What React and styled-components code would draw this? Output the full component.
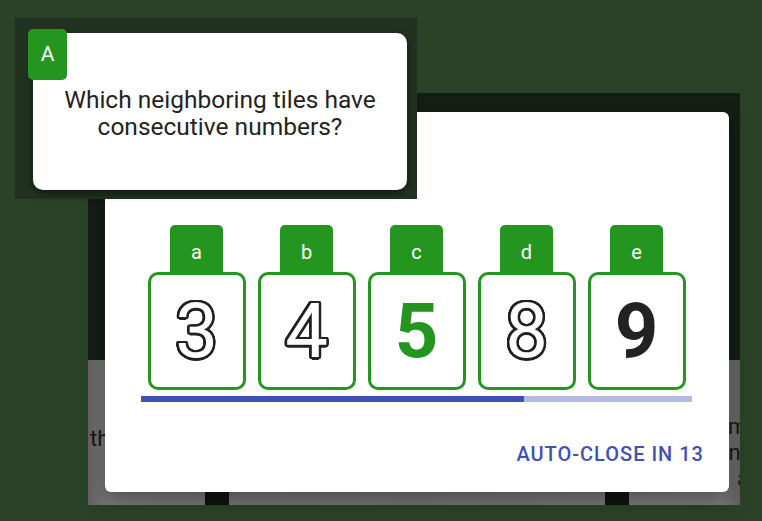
import styled, { createGlobalStyle, css } from 'styled-components';

const GREEN = '#24961f';
const INDIGO = '#3f51b5';

// ring of shadows that reads as an outline around white digits
const outlineRing = (radius, color, steps = 24) =>
  Array.from({ length: steps }, (_, i) => {
    const a = (i / steps) * Math.PI * 2;
    return `${(Math.cos(a) * radius).toFixed(2)}px ${(Math.sin(a) * radius).toFixed(2)}px 0 ${color}`;
  })
    .concat(
      Array.from({ length: 12 }, (_, i) => {
        const a = (i / 12) * Math.PI * 2;
        const r = radius * 0.55;
        return `${(Math.cos(a) * r).toFixed(2)}px ${(Math.sin(a) * r).toFixed(2)}px 0 ${color}`;
      })
    )
    .join(', ');

const GlobalStyle = createGlobalStyle`
  html, body {
    margin: 0;
    padding: 0;
    background: #2a4227;
  }
  body {
    font-family: Roboto, "Liberation Sans", sans-serif;
  }
`;

const Stage = styled.div`
  position: relative;
  width: 762px;
  height: 521px;
  box-sizing: border-box;
  padding: 93px 0 0 88px;
  overflow: hidden;
  background: #2a4227;
`;

/* the app screen that sits behind the dialog */
const BackPage = styled.div`
  width: 652px;
  height: 412px;
  display: flex;
  flex-direction: column;
  overflow: hidden;
`;

const BackHeader = styled.div`
  height: 275px;
  background: #141e13;
`;

const BackBody = styled.div`
  flex: 1;
  display: flex;
  flex-direction: column;
  background: linear-gradient(90deg, #626262 0%, #7a7a7a 3%, #737373 50%, #7d7d7d 97%, #5f5f5f 100%);
`;

const BackText = styled.div`
  flex: 1;
  display: flex;
  justify-content: space-between;
  padding-left: 2px;
  font-size: 22px;
  line-height: 26px;
  color: #161616;
`;

const LeftWords = styled.div`
  padding-top: 66px;
`;

const RightWords = styled.div`
  width: 24px;
  padding-top: 54px;
  white-space: pre;
  overflow: hidden;
`;

const RightLine = styled.div`
  padding-left: ${(p) => p.$indent || 0}px;
`;

const PostRow = styled.div`
  display: flex;
  gap: 376px;
  padding-left: 117px;
  height: 13px;
`;

const Post = styled.div`
  width: 24px;
  background: #0e150d;
`;

/* dialog */
const Modal = styled.div`
  position: absolute;
  left: 105px;
  top: 112px;
  width: 624px;
  height: 380px;
  box-sizing: border-box;
  padding: 113px 26px 0 36px;
  display: flex;
  flex-direction: column;
  background: #fff;
  border-radius: 6px;
  box-shadow: 0 8px 20px rgba(0, 0, 0, 0.35);
`;

const TileRow = styled.div`
  width: 551px;
  display: flex;
  justify-content: center;
  gap: 12px;
`;

const TileColumn = styled.div`
  display: flex;
  flex-direction: column;
  align-items: center;
`;

const Tab = styled.div`
  width: 53px;
  height: 50px;
  box-sizing: border-box;
  padding-top: 15px;
  background: ${GREEN};
  border-radius: 5px 5px 0 0;
  color: #fff;
  font-size: 20px;
  line-height: 24px;
  text-align: center;
`;

const TileBox = styled.div`
  margin-top: -3px;
  width: 98px;
  height: 118px;
  box-sizing: border-box;
  border: 3.5px solid ${GREEN};
  border-radius: 10px;
  background: #fff;
  display: flex;
  align-items: center;
  justify-content: center;
`;

const variants = {
  outline: css`
    font-weight: 400;
    color: #fff;
    text-shadow: ${outlineRing(2.5, '#222')};
  `,
  green: css`
    font-weight: 700;
    color: ${GREEN};
  `,
  solid: css`
    font-weight: 700;
    color: #222;
  `,
};

const Digit = styled.span`
  font-size: 76px;
  line-height: 76px;
  ${(p) => variants[p.$variant]}
`;

const Track = styled.div`
  margin-top: 6px;
  width: 551px;
  height: 6px;
  background: #b4bae1;
`;

const Fill = styled.div`
  height: 100%;
  background: ${INDIGO};
`;

const Footer = styled.div`
  margin-top: 40px;
  text-align: right;
  font-size: 20px;
  line-height: 24px;
  font-weight: 500;
  letter-spacing: 1px;
  margin-right: -1px;
  color: ${INDIGO};
`;

/* question card in the corner */
const QuestionFrame = styled.div`
  position: absolute;
  left: 15px;
  top: 18px;
  width: 402px;
  height: 181px;
  box-sizing: border-box;
  padding: 15px 10px 9px 18px;
  display: flex;
  background: #213320;
`;

const QuestionCard = styled.div`
  position: relative;
  flex: 1;
  padding: 53px 12px 0;
  background: #fff;
  border-radius: 10px;
  box-shadow: 0 3px 8px rgba(0, 0, 0, 0.55);
  text-align: center;
  font-size: 24.5px;
  line-height: 27px;
  color: #232323;
`;

const Badge = styled.div`
  position: absolute;
  left: -5px;
  top: -4px;
  width: 39px;
  height: 51px;
  display: flex;
  align-items: center;
  justify-content: center;
  background: ${GREEN};
  border-radius: 5px;
  color: #fff;
  font-size: 21px;
`;

const tiles = [
  { label: 'a', value: 3, variant: 'outline' },
  { label: 'b', value: 4, variant: 'outline' },
  { label: 'c', value: 5, variant: 'green' },
  { label: 'd', value: 8, variant: 'outline' },
  { label: 'e', value: 9, variant: 'solid' },
];

const progress = 383 / 551;

export default function App() {
  return (
    <>
      <GlobalStyle />
      <Stage>
        <BackPage>
          <BackHeader />
          <BackBody>
            <BackText>
              <LeftWords>the</LeftWords>
              <RightWords>
                <RightLine>am</RightLine>
                <RightLine>on(</RightLine>
                <RightLine $indent={21}>a</RightLine>
              </RightWords>
            </BackText>
            <PostRow>
              <Post />
              <Post />
            </PostRow>
          </BackBody>
        </BackPage>

        <Modal>
          <TileRow>
            {tiles.map((t) => (
              <TileColumn key={t.label}>
                <Tab>{t.label}</Tab>
                <TileBox>
                  <Digit $variant={t.variant}>{t.value}</Digit>
                </TileBox>
              </TileColumn>
            ))}
          </TileRow>
          <Track>
            <Fill style={{ width: `${progress * 100}%` }} />
          </Track>
          <Footer>AUTO-CLOSE IN 13</Footer>
        </Modal>

        <QuestionFrame>
          <QuestionCard>
            <Badge>A</Badge>
            Which neighboring tiles have consecutive numbers?
          </QuestionCard>
        </QuestionFrame>
      </Stage>
    </>
  );
}
